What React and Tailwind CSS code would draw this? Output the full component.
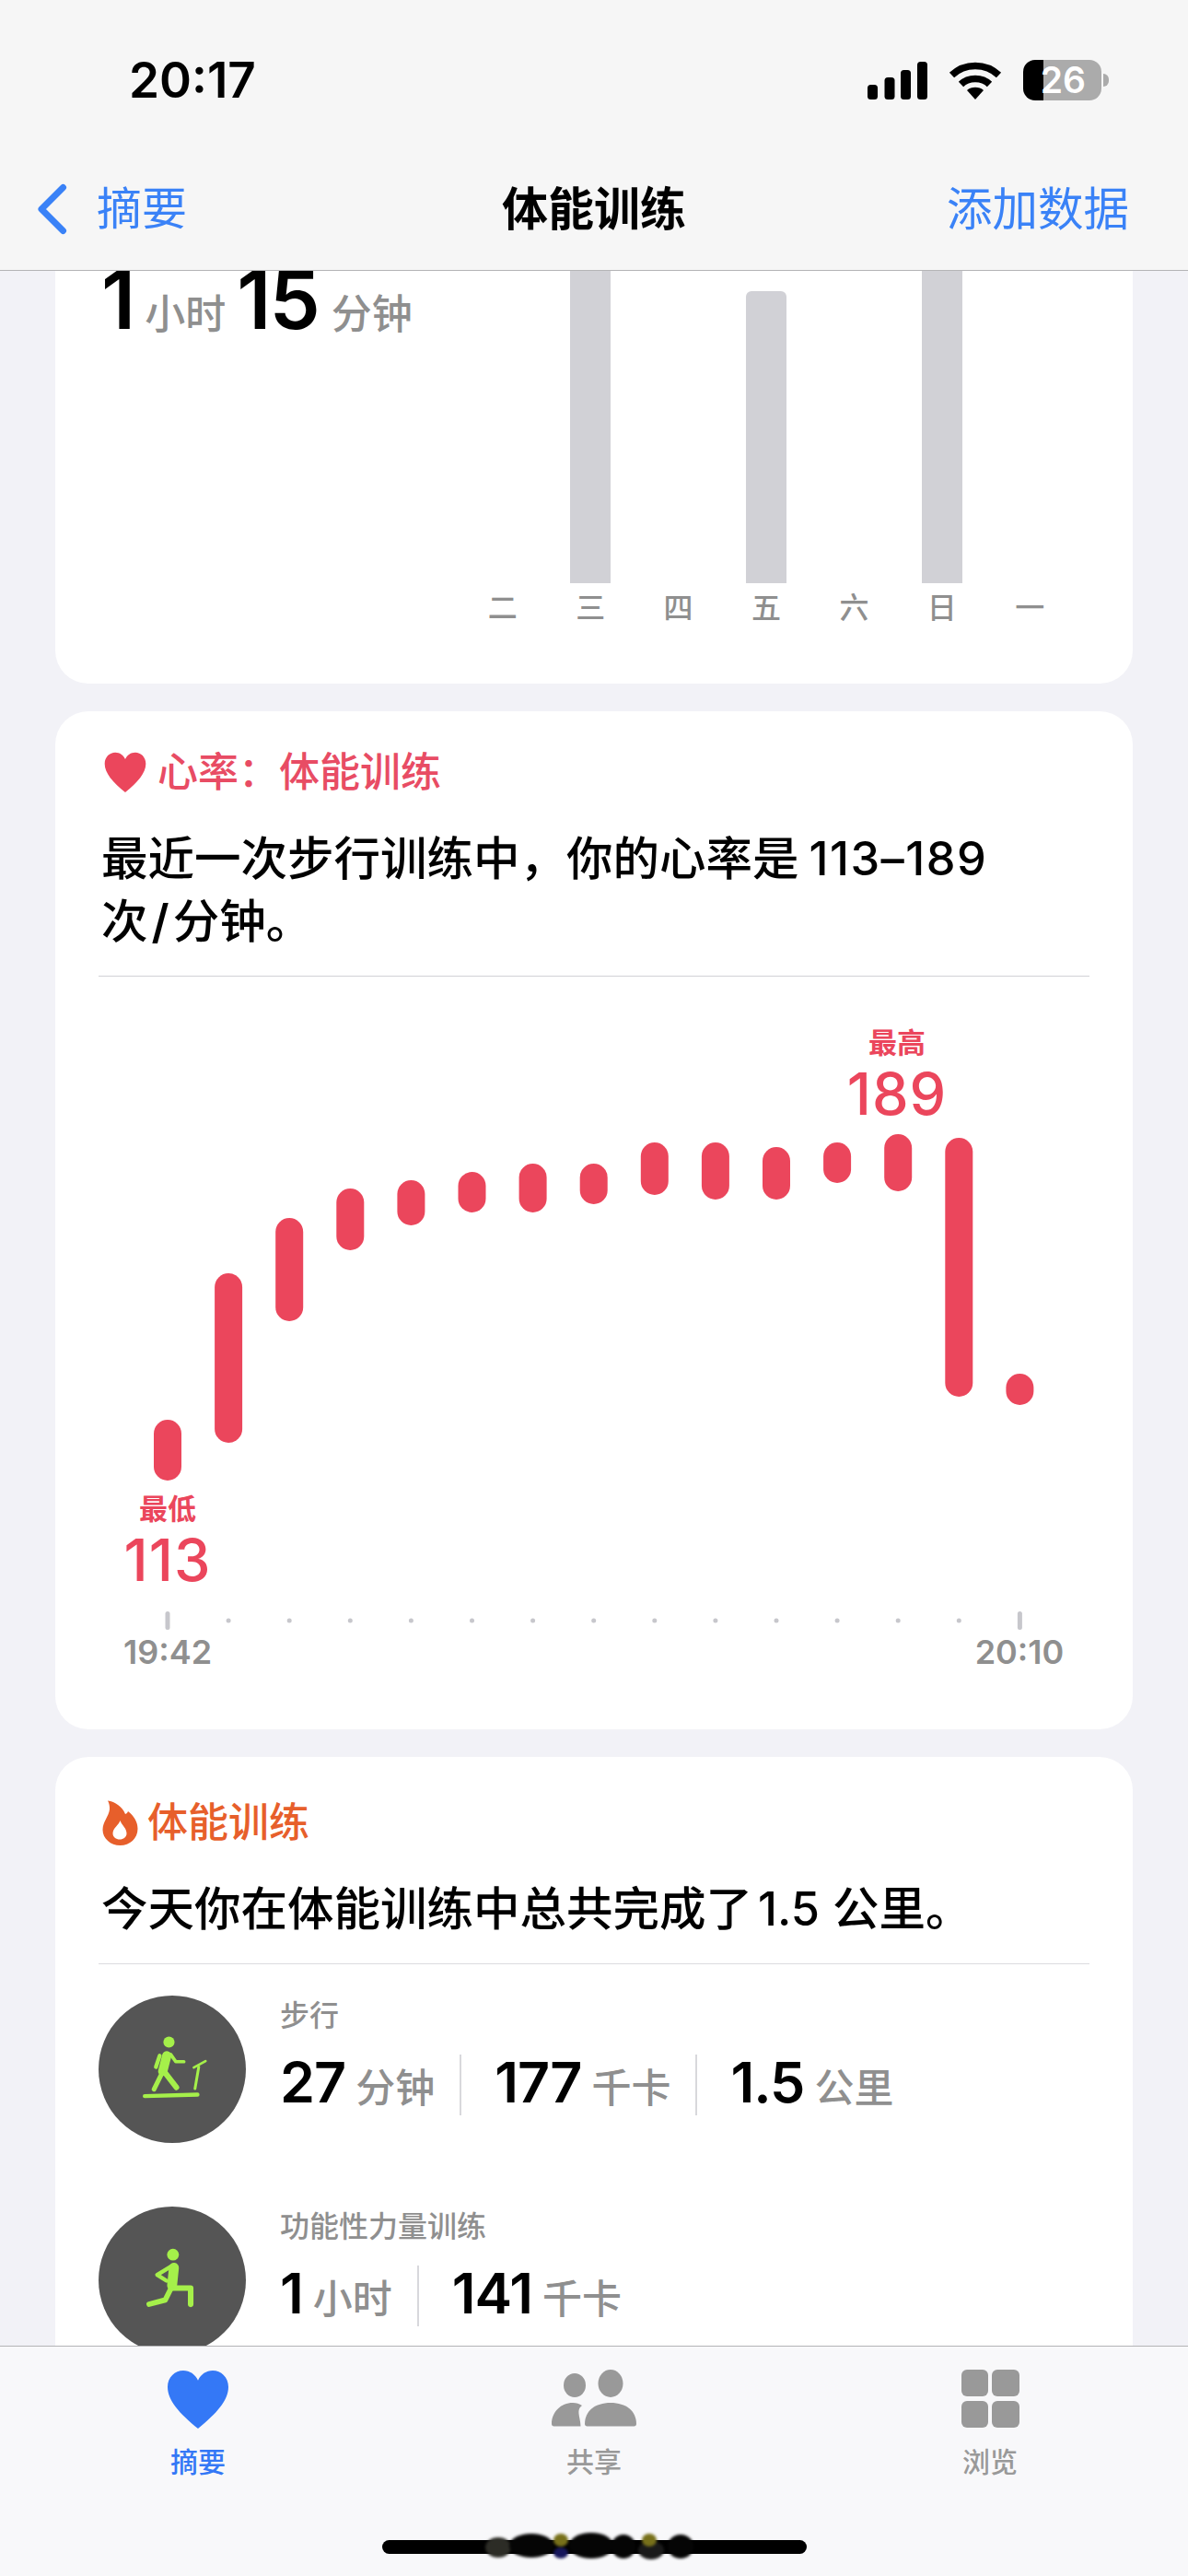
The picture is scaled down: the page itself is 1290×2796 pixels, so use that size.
const FONT = { fontFamily: 'Inter, "Noto Sans CJK SC", sans-serif' };

const weekDays = [
  { label: '二', height: 0 },
  { label: '三', height: 339, clipped: true },
  { label: '四', height: 0 },
  { label: '五', height: 317 },
  { label: '六', height: 0 },
  { label: '日', height: 339, clipped: true },
  { label: '一', height: 0 },
];

// top / bottom of each heart rate bar, measured from the chart's top edge
const heartBars = [
  [481, 547], [322, 506], [262, 374], [230, 297], [221, 270],
  [212, 256], [203, 256], [203, 247], [180, 237], [180, 242],
  [185, 242], [180, 224], [171, 233], [175, 456], [431, 465],
];

function Signal() {
  return (
    <svg width="65" height="41" viewBox="0 0 65 41" fill="black">
      <rect x="0" y="25" width="11" height="16" rx="3.5" />
      <rect x="18.500" y="17" width="11" height="24" rx="3.5" />
      <rect x="36" y="9" width="11" height="32" rx="3.5" />
      <rect x="54" y="0" width="11" height="41" rx="3.5" />
    </svg>
  );
}

function Wifi() {
  return (
    <svg width="58" height="42" viewBox="0 0 58 42" fill="none" stroke="black">
      <path d="M3.500 15.500C17.500 2 40.500 2 54.500 15.500" strokeWidth="7.500" />
      <path d="M13.500 25.500C21.500 17.500 36.500 17.500 44.500 25.500" strokeWidth="7.500" />
      <path d="M20 32C24.500 27.800 33.500 27.800 38 32L29 42Z" fill="black" stroke="none" />
    </svg>
  );
}

function Battery() {
  return (
    <div className="flex items-center gap-[2px]">
      <div className="flex h-[44px] w-[85px] items-center justify-end rounded-[13px] bg-[linear-gradient(to_right,#000_22px,#ababab_22px)] pr-[17px]">
        <span className="text-[39px] font-semibold leading-[44px] text-white">26</span>
      </div>
      <div className="h-[14px] w-[6px] rounded-r-full bg-[#ababab]" />
    </div>
  );
}

function HeartIcon({ className }) {
  return (
    <svg className={className} viewBox="0 0 68 63" preserveAspectRatio="none" fill="currentColor">
      <path d="M34 63C14 47 1 33 1 18.500C1 8 9 1 18 1C25 1 31 5 34 11.500C37 5 43 1 50 1C59 1 67 8 67 18.500C67 33 54 47 34 63Z" />
    </svg>
  );
}

function FlameIcon() {
  return (
    <svg width="39" height="49" viewBox="0 0 39 49">
      <path
        fillRule="evenodd"
        fill="#e75f2b"
        d="M6 0.500C14 1.500 22 7 25 15C26.500 14.500 27.500 13.500 28 12C34 16.500 38.500 23 38.500 31C38.500 41.500 30 49 19.500 49C9 49 0.500 41.500 0.500 32C0.500 23 7 18 8 10C8.300 6.500 7.500 3 6 0.500ZM19.500 22C18 27 11.500 30 11.500 36C11.500 40 15 42.500 19 42.500C23 42.500 26.500 40 26.500 36C26.500 30 21 27 19.500 22Z"
      />
    </svg>
  );
}

function WalkIcon() {
  return (
    <svg width="160" height="160" viewBox="85 78 475 475" fill="none" stroke="#a5f04a" strokeLinecap="round" strokeLinejoin="round">
      <circle cx="312" cy="228" r="18" fill="#a5f04a" stroke="none" />
      <path d="M305 272L292 322" strokeWidth="30" />
      <path d="M282 272L270 308" strokeWidth="13" />
      <path d="M318 268L334 291H360" strokeWidth="11" fill="none" />
      <path d="M298 325L336 374" strokeWidth="18" />
      <path d="M286 335L264 380" strokeWidth="15" />
      <path d="M234 402L404 397" strokeWidth="13" />
      <path d="M396 378L408 308" strokeWidth="9" />
      <path d="M392 310L430 289" strokeWidth="8" />
    </svg>
  );
}

function LungeIcon() {
  return (
    <svg width="160" height="160" viewBox="85 765 475 475" fill="none" stroke="#a5f04a" strokeLinecap="round" strokeLinejoin="round">
      <circle cx="325" cy="920" r="19" fill="#a5f04a" stroke="none" />
      <path d="M328 962L322 1020" strokeWidth="32" />
      <path d="M318 958L274 985L304 1004" strokeWidth="13" />
      <path d="M325 1028H382V1080" strokeWidth="18" />
      <path d="M318 1030L300 1066L248 1080" strokeWidth="17" />
    </svg>
  );
}

function PeopleIcon() {
  return (
    <svg width="92" height="64" viewBox="0 0 92 64" fill="#999999">
      <ellipse cx="25" cy="17" rx="12" ry="13" />
      <ellipse cx="64" cy="15" rx="13.500" ry="15" />
      <path d="M36 59C36 45 47 36 64 36C81 36 92 45 92 59C92 60.500 91 61.500 89.500 61.500H38.500C37 61.500 36 60.500 36 59Z" />
      <path d="M0 59C0 46 10 36 23 36C27 36 30 37 33 39C26 44 31.500 52 31.500 61.500H2.500C1 61.500 0 60.500 0 59Z" />
    </svg>
  );
}

function GridIcon() {
  return (
    <div className="grid h-[63px] w-[63px] grid-cols-2 gap-x-[4px] gap-y-[5px]">
      <div className="rounded-[6px] bg-[#999999]" />
      <div className="rounded-[6px] bg-[#999999]" />
      <div className="rounded-[6px] bg-[#999999]" />
      <div className="rounded-[6px] bg-[#999999]" />
    </div>
  );
}

function HeartChart() {
  return (
    <div className="relative h-[817px]">
      <svg className="absolute left-0 top-0" width="1076" height="760" viewBox="0 0 1076 760">
        {heartBars.map(([top, bottom], i) => (
          <rect key={i} x={60 + 66.1 * i} y={top} width="30" height={bottom - top} rx="15" fill="#eb465c" />
        ))}
        {heartBars.map((_, i) =>
          i === 0 || i === 14 ? (
            <rect key={i} x={72.500 + 66.1 * i} y="689" width="5" height="20" rx="2.500" fill="#c7c7cc" />
          ) : (
            <circle key={i} cx={75 + 66.1 * i} cy="699" r="2.500" fill="#c7c7cc" />
          ),
        )}
      </svg>
      <div className="absolute left-[807px] top-[52px] w-[120px] text-center text-[31px] font-semibold leading-[40px] text-[#eb465c]">最高</div>
      <div className="absolute left-[807px] top-[97px] w-[120px] text-center text-[63px] font-medium leading-[60px] tracking-[1px] text-[#eb465c]">189</div>
      <div className="absolute left-[15px] top-[558px] w-[120px] text-center text-[31px] font-semibold leading-[40px] text-[#eb465c]">最低</div>
      <div className="absolute left-[15px] top-[603px] w-[120px] text-center text-[63px] font-medium leading-[60px] tracking-[1px] text-[#eb465c]">113</div>
      <div className="absolute left-[15px] top-[713px] w-[120px] text-center text-[36px] font-semibold leading-[40px] text-[#8f8f8f]">19:42</div>
      <div className="absolute left-[940px] top-[713px] w-[120px] text-center text-[36px] font-semibold leading-[40px] text-[#8f8f8f]">20:10</div>
    </div>
  );
}

function Stat({ value, unit }) {
  return (
    <div className="flex items-baseline gap-[11px]">
      <span className="text-[61px] font-semibold leading-[66px] tracking-[-1px] text-black">{value}</span>
      <span className="text-[43px] font-medium leading-[66px] text-[#8f8f8f]">{unit}</span>
    </div>
  );
}

function Workout({ icon, name, stats }) {
  return (
    <div className="flex gap-[37px]">
      <div className="flex h-[160px] w-[160px] shrink-0 items-center justify-center rounded-full bg-[#555555]">{icon}</div>
      <div className="pt-[2px]">
        <p className="text-[32px] font-medium leading-[40px] text-[#8f8f8f]">{name}</p>
        <div className="mt-[19px] flex items-center">
          {stats.map((s, i) => (
            <div key={s.unit} className="flex items-center">
              {i > 0 && <div className="ml-[27px] mr-[36px] h-[66px] w-[2px] bg-[#d8d8dc]" />}
              <Stat value={s.value} unit={s.unit} />
            </div>
          ))}
        </div>
      </div>
    </div>
  );
}

export default function App() {
  return (
    <div className="flex h-[2796px] w-[1290px] flex-col overflow-hidden bg-[#f2f2f7]" style={FONT}>
      {/* status + nav */}
      <header className="h-[294px] shrink-0 border-b border-[#b4b4b6] bg-[#f6f6f6]">
        <div className="flex h-[174px] items-center justify-between pl-[140px] pr-[86px]">
          <span className="text-[53px] font-semibold leading-[60px] text-black">20:17</span>
          <div className="flex items-center gap-[23px]">
            <Signal />
            <Wifi />
            <Battery />
          </div>
        </div>
        <div className="grid h-[106px] grid-cols-[1fr_auto_1fr] items-center px-[40px]">
          <div className="flex items-center gap-[32px]">
            <svg width="33" height="56" viewBox="0 0 33 56" fill="none" stroke="#3a82f7" strokeWidth="7" strokeLinecap="round" strokeLinejoin="round">
              <path d="M28.500 4.500L5 28L28.500 51.500" />
            </svg>
            <span className="text-[49px] leading-[60px] text-[#3a82f7]">摘要</span>
          </div>
          <span className="text-[50px] font-semibold leading-[60px] text-black">体能训练</span>
          <span className="mr-[24px] text-right text-[49.500px] leading-[60px] text-[#3a82f7]">添加数据</span>
        </div>
      </header>

      <main className="flex min-h-0 flex-1 flex-col gap-[30px] overflow-hidden px-[60px]">
        {/* duration card, scrolled under the nav */}
        <section className="flex h-[448px] shrink-0 justify-between rounded-b-[36px] bg-white pl-[50px] pr-[64px]">
          <div className="flex h-[62px] items-baseline">
            <span className="text-[88px] font-semibold leading-[62px] tracking-[-2px] text-black">1</span>
            <span className="ml-[12px] text-[44px] font-medium leading-[62px] text-[#8f8f8f]">小时</span>
            <span className="ml-[12px] text-[88px] font-semibold leading-[62px] tracking-[-2px] text-black">15</span>
            <span className="ml-[14px] text-[44px] font-medium leading-[62px] text-[#8f8f8f]">分钟</span>
          </div>
          <div className="grid w-[668px] grid-cols-7">
            {weekDays.map((d) => (
              <div key={d.label} className="flex flex-col items-center">
                <div className="flex h-[339px] items-end">
                  {d.height > 0 && (
                    <div
                      className={d.clipped ? 'w-[44px] bg-[#d1d1d6]' : 'w-[44px] rounded-t-[6px] bg-[#d1d1d6]'}
                      style={{ height: d.height }}
                    />
                  )}
                </div>
                <span className="mt-[7px] text-[32px] font-medium leading-[40px] text-[#8f8f8f]">{d.label}</span>
              </div>
            ))}
          </div>
        </section>

        {/* heart rate */}
        <section className="h-[1105px] shrink-0 rounded-[36px] bg-white px-[47px] pt-[36px]">
          <div className="flex h-[60px] items-center pl-[6px]">
            <HeartIcon className="h-[44px] w-[46px] text-[#eb465c]" />
            <span className="ml-[12px] text-[44px] font-medium leading-[60px] text-[#e84c64]">{'心率\uFF1A体能训练'}</span>
          </div>
          <p className="ml-[3px] mt-[30px] text-[50.500px] font-medium leading-[68px] text-black">
            {'最近一次步行训练中\uFF0C你的心率是'}
            <span className="ml-[11px] tracking-[1.500px]">113–189</span>
            <br />
            次<span className="mx-[4px] font-semibold">/</span>分钟。
          </p>
          <div className="mt-[25px] h-px bg-[#d1d1d6]" />
          <HeartChart />
        </section>

        {/* workouts */}
        <section className="shrink-0 rounded-t-[36px] bg-white px-[47px] pt-[41px]">
          <div className="flex h-[60px] items-center pl-[4px]">
            <FlameIcon />
            <span className="ml-[10px] text-[44px] font-medium leading-[60px] text-[#e75f2b]">体能训练</span>
          </div>
          <p className="ml-[3px] mt-[30px] text-[50.500px] font-medium leading-[68px] text-black">
            今天你在体能训练中总共完成了
            <span className="ml-[6px] mr-[14px]">1.5</span>
            公里。
          </p>
          <div className="mb-[34px] mt-[25px] h-px bg-[#dcdcdf]" />
          <div className="flex flex-col gap-[69px]">
            <Workout
              icon={<WalkIcon />}
              name="步行"
              stats={[
                { value: '27', unit: '分钟' },
                { value: '177', unit: '千卡' },
                { value: '1.5', unit: '公里' },
              ]}
            />
            <Workout
              icon={<LungeIcon />}
              name="功能性力量训练"
              stats={[
                { value: '1', unit: '小时' },
                { value: '141', unit: '千卡' },
              ]}
            />
          </div>
        </section>
      </main>

      {/* tab bar */}
      <nav className="h-[250px] shrink-0 border-t border-[#b4b4b6] bg-[#f8f8fa] pt-[25px]">
        <div className="grid grid-cols-3">
          <div className="flex flex-col items-center">
            <HeartIcon className="h-[64px] w-[68px] text-[#3478f6]" />
            <span className="mt-[16px] text-[30px] font-medium leading-[40px] text-[#3478f6]">摘要</span>
          </div>
          <div className="flex flex-col items-center">
            <PeopleIcon />
            <span className="mt-[16px] text-[30px] font-medium leading-[40px] text-[#999999]">共享</span>
          </div>
          <div className="flex flex-col items-center">
            <div className="h-[64px]">
              <GridIcon />
            </div>
            <span className="mt-[16px] text-[30px] font-medium leading-[40px] text-[#999999]">浏览</span>
          </div>
        </div>
        <div className="relative mx-auto mt-[65px] h-[15px] w-[461px] rounded-full bg-black">
          {/* smudged-out watermark over the home bar */}
          <svg className="absolute left-[112px] top-[-9px] blur-[1.5px]" width="232" height="36" viewBox="0 0 232 36">
            <ellipse cx="14" cy="17" rx="14" ry="11" fill="#2c2c26" />
            <ellipse cx="50" cy="15" rx="24" ry="13" fill="#050505" />
            <ellipse cx="115" cy="15" rx="24" ry="14" fill="#050505" />
            <ellipse cx="150" cy="16" rx="13" ry="13" fill="#050505" />
            <ellipse cx="180" cy="20" rx="14" ry="10" fill="#1a1a1a" />
            <ellipse cx="212" cy="16" rx="14" ry="13" fill="#050505" />
            <ellipse cx="82" cy="9" rx="8" ry="7" fill="#77701a" />
            <ellipse cx="82" cy="23" rx="8" ry="6" fill="#16165c" />
            <ellipse cx="178" cy="9" rx="8" ry="7" fill="#77701a" />
          </svg>
        </div>
      </nav>
    </div>
  );
}
